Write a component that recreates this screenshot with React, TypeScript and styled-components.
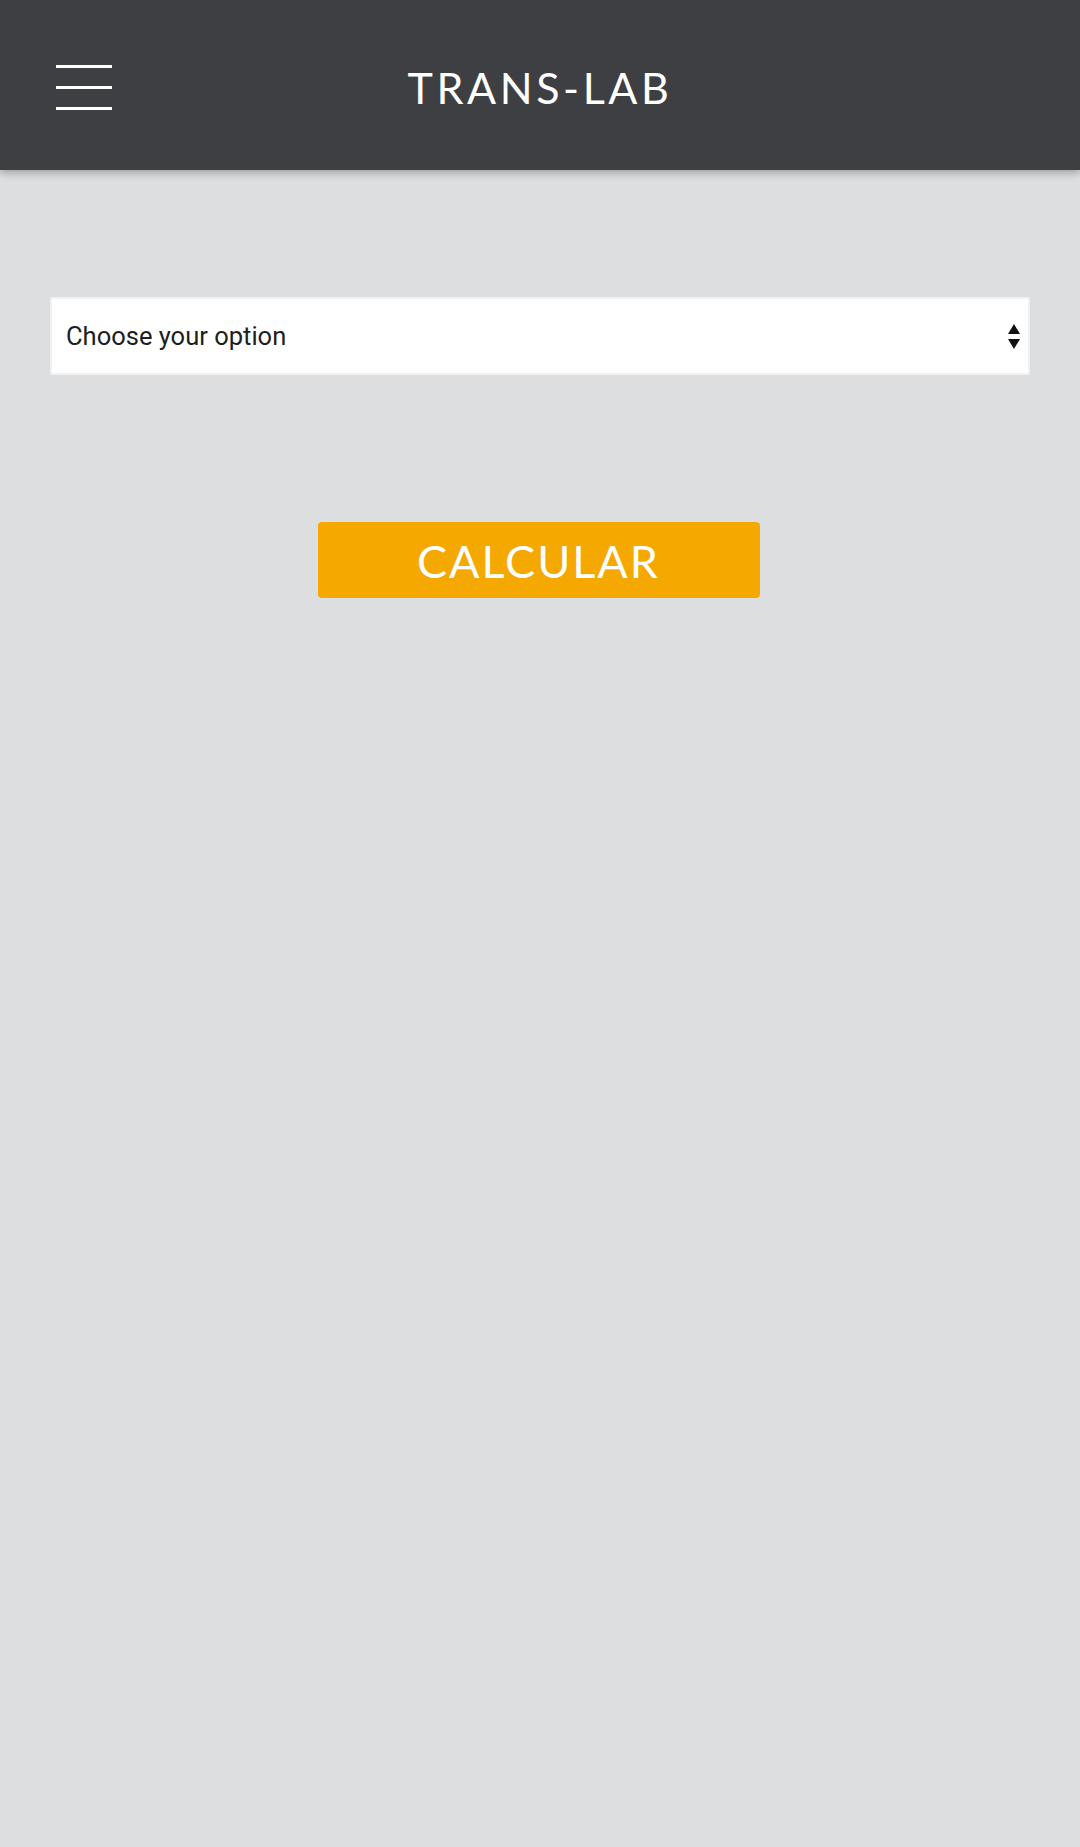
import styled, { createGlobalStyle } from "styled-components";

const GlobalStyle = createGlobalStyle`
  html, body {
    margin: 0;
    padding: 0;
    background: #dddee0;
    min-height: 1847px;
  }
  * {
    box-sizing: border-box;
  }
`;

const Page = styled.div`
  min-height: 1847px;
  background: #dddee0;
`;

const Header = styled.header`
  position: relative;
  height: 170px;
  background-color: #3e3f42;
  box-shadow: 0 3px 8px rgba(0, 0, 0, 0.28);
  display: flex;
  align-items: center;
  justify-content: center;
`;

const MenuButton = styled.button`
  position: absolute;
  left: 56px;
  top: 65px;
  width: 56px;
  height: 45px;
  padding: 0;
  border: none;
  background: transparent;
  display: flex;
  flex-direction: column;
  justify-content: space-between;
  cursor: pointer;
`;

const Bar = styled.span`
  display: block;
  height: 3px;
  width: 100%;
  background: #ffffff;
`;

const Title = styled.h1`
  margin: 4px 0 0;
  color: #ffffff;
  font-family: Lato, "Liberation Sans", sans-serif;
  font-weight: 400;
  font-size: 43px;
  letter-spacing: 3.6px;
  line-height: 1;
`;

const Content = styled.main`
  padding: 127px 50px 0 50px;
  display: flex;
  flex-direction: column;
  align-items: center;
`;

const SelectWrap = styled.div`
  position: relative;
  width: 980px;
  height: 78px;
  background: #ffffff;
  border: 2px solid #f1f1f1;
  border-radius: 2px;
  display: flex;
  align-items: center;
  padding-left: 14px;
`;

const SelectText = styled.span`
  font-family: Roboto, "Liberation Sans", sans-serif;
  font-size: 25.5px;
  color: #1e1e1e;
`;

const Arrows = styled.svg`
  position: absolute;
  right: 7px;
  top: 25px;
`;

const CalcButton = styled.button`
  margin: 147px 3px 0 0;
  width: 442px;
  height: 76px;
  border: none;
  border-radius: 4px;
  background: #f5a800;
  color: #ffffff;
  font-family: Lato, "Liberation Sans", sans-serif;
  font-weight: 400;
  font-size: 45px;
  letter-spacing: 2px;
  padding: 2px 0 0;
  cursor: pointer;
`;

export default function App() {
  return (
    <Page>
      <GlobalStyle />
      <Header>
        <MenuButton aria-label="menu">
          <Bar />
          <Bar />
          <Bar />
        </MenuButton>
        <Title>TRANS-LAB</Title>
      </Header>
      <Content>
        <SelectWrap>
          <SelectText>Choose your option</SelectText>
          <Arrows width="14" height="26" viewBox="0 0 14 26">
            <polygon points="7,0 13,10 1,10" fill="#111" />
            <polygon points="1,15 13,15 7,25" fill="#111" />
          </Arrows>
        </SelectWrap>
        <CalcButton>CALCULAR</CalcButton>
      </Content>
    </Page>
  );
}
